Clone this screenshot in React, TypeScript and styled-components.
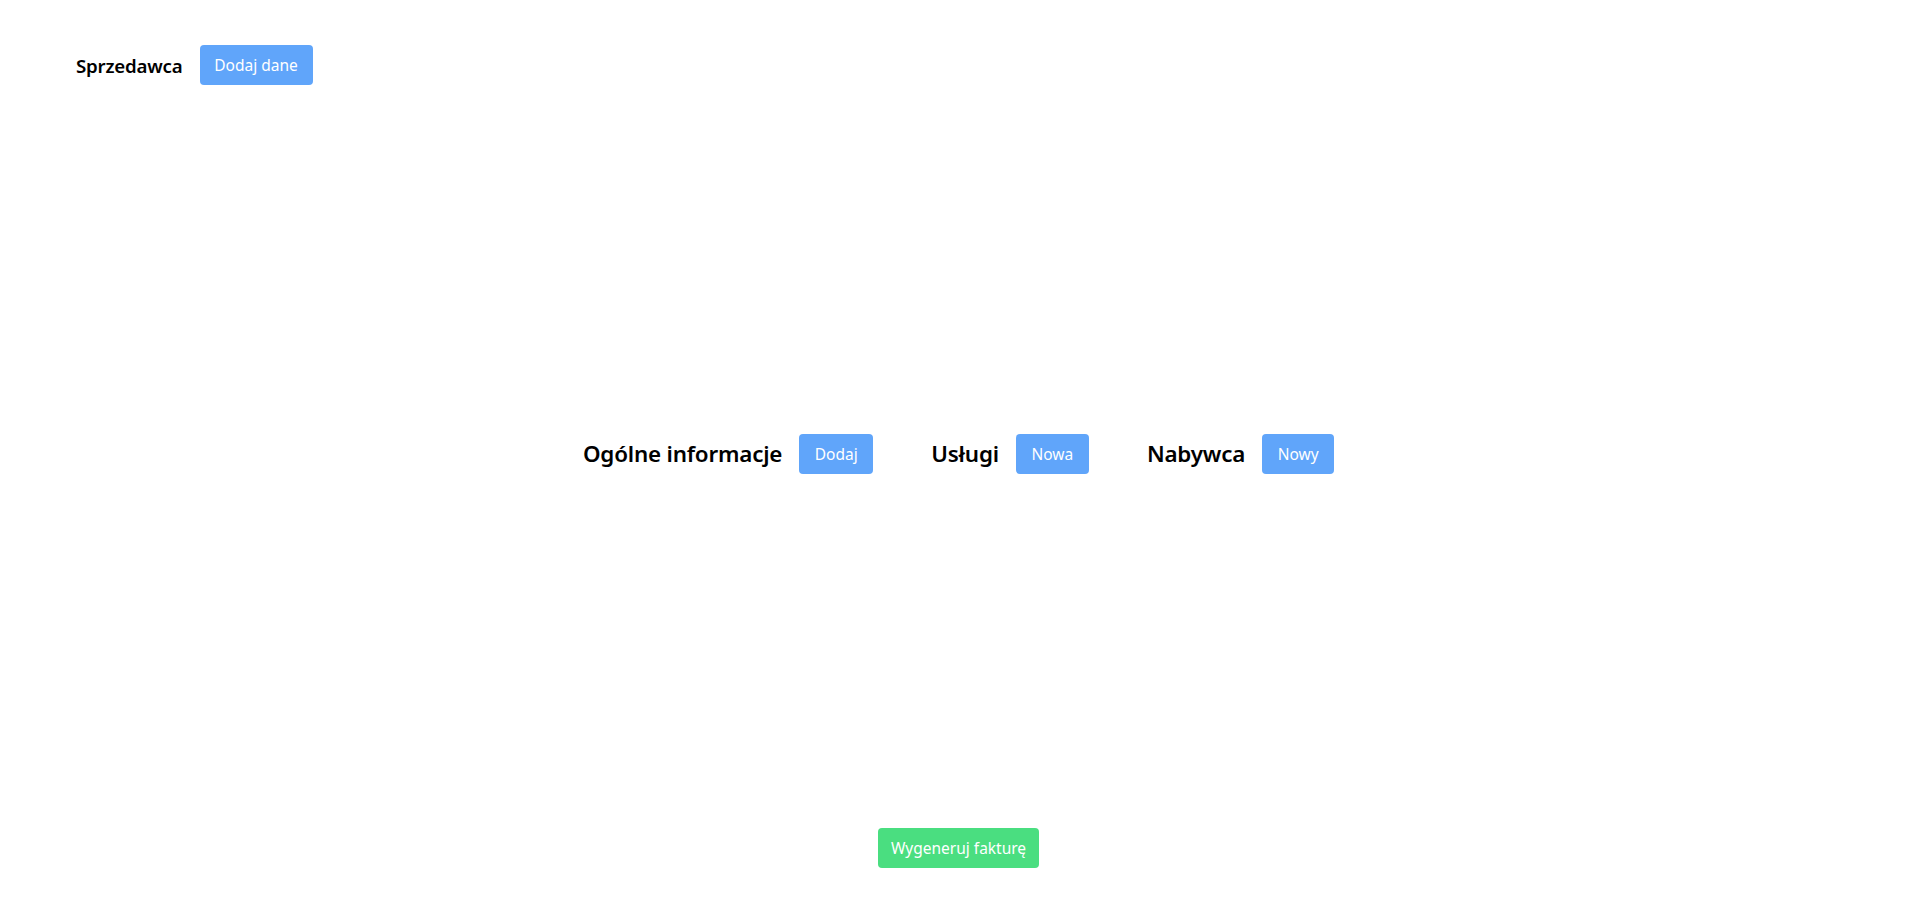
import React from "react";
import styled, { createGlobalStyle } from "styled-components";

const Global = createGlobalStyle`
  html, body { margin: 0; padding: 0; background: #ffffff; }
  body { font-family: "Noto Sans", "Open Sans", Arial, sans-serif; color: #000; }
  * { box-sizing: border-box; }
`;

const Page = styled.div`
  min-height: 100vh;
  display: flex;
  flex-direction: column;
  padding: 45px 76px 56px;
`;

const Row = styled.div<{ $center?: boolean }>`
  display: flex;
  align-items: center;
  justify-content: ${(p) => (p.$center ? "center" : "flex-start")};
`;

const Middle = styled.div`
  flex: 1;
  display: flex;
  align-items: center;
  justify-content: center;
  gap: 58px;
  padding-bottom: 6px;
`;

const Section = styled.div`
  display: flex;
  align-items: center;
  gap: 17px;
`;

const Title = styled.h2<{ $size: number }>`
  margin: 0;
  font-size: ${(p) => p.$size}px;
  font-weight: 600;
  letter-spacing: -0.2px;
`;

const Button = styled.button<{ $color: string; $w: number }>`
  border: none;
  border-radius: 4px;
  background: ${(p) => p.$color};
  color: #fff;
  font-family: inherit;
  font-size: 15.5px;
  height: 40px;
  width: ${(p) => p.$w}px;
  padding: 0;
  cursor: pointer;
`;

const BLUE = "#60a5fa";
const GREEN = "#4ade80";

export default function App() {
  return (
    <>
      <Global />
      <Page>
        <Row>
          <Section>
            <Title $size={18.7}>Sprzedawca</Title>
            <Button $color={BLUE} $w={113}>Dodaj dane</Button>
          </Section>
        </Row>
        <Middle>
          <Section>
            <Title $size={22.4}>Ogólne informacje</Title>
            <Button $color={BLUE} $w={74}>Dodaj</Button>
          </Section>
          <Section>
            <Title $size={22.4}>Usługi</Title>
            <Button $color={BLUE} $w={73}>Nowa</Button>
          </Section>
          <Section>
            <Title $size={22.4}>Nabywca</Title>
            <Button $color={BLUE} $w={72}>Nowy</Button>
          </Section>
        </Middle>
        <Row $center>
          <Button $color={GREEN} $w={161}>Wygeneruj fakturę</Button>
        </Row>
      </Page>
    </>
  );
}
